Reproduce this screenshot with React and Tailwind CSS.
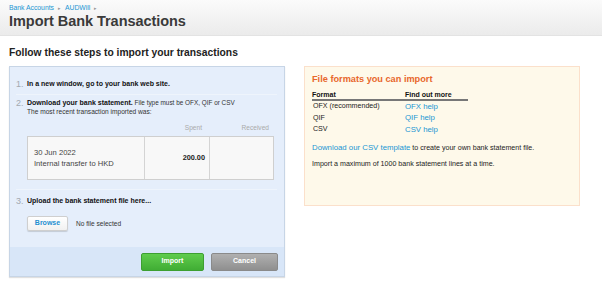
// Import Bank Transactions – static recreation
const font = { fontFamily: '"Liberation Sans", Arial, sans-serif' };

function Step({ n, children }) {
  return (
    <div className="flex">
      <div className="w-[11px] shrink-0 text-[9px] leading-[10px] text-[#a3a9b0]">{n}.</div>
      <div className="flex-1 min-w-0">{children}</div>
    </div>
  );
}

function Separator({ className = '' }) {
  return <div className={`h-px bg-[#d3dfee] border-b border-[#eef4fc] ${className}`} />;
}

const formats = [
  { name: 'OFX (recommended)', link: 'OFX help' },
  { name: 'QIF', link: 'QIF help' },
  { name: 'CSV', link: 'CSV help' },
];

export default function App() {
  return (
    <div className="w-[602px] h-[291px] overflow-hidden bg-white text-[#222]" style={font}>
      {/* Page header */}
      <div className="h-[36px] pl-[9px] pt-[4px] bg-gradient-to-b from-[#fbfbfb] to-[#ebebeb] border-b border-[#e3e3e3]">
        <div className="flex items-center gap-[4px] text-[6.8px] leading-[8px] text-[#2196d3]">
          <span>Bank Accounts</span>
          <span className="text-[#999] text-[5px]">▸</span>
          <span>AUDWill</span>
          <span className="text-[#999] text-[5px]">▸</span>
        </div>
        <h1 className="text-[14.5px] leading-[18px] font-bold text-[#3a3a3a] tracking-[-0.05px]">
          Import Bank Transactions
        </h1>
      </div>

      <h2 className="ml-[9px] mt-[11px] text-[10.3px] leading-[12px] font-bold text-[#222]">
        Follow these steps to import your transactions
      </h2>

      <div className="flex gap-[19px] ml-[9px] mt-[7px] items-start">
        {/* Steps panel */}
        <div className="w-[276px] h-[211px] flex flex-col border border-[#c7d5e6] bg-[#e5eefb] shadow-[0_1px_1px_rgba(0,0,0,0.12)]">
          <div className="flex-1 pl-[6px] pr-[10px] pt-[12px]">
            <Step n={1}>
              <div className="text-[7px] leading-[10px] font-bold text-[#111]">
                In a new window, go to your bank web site.
              </div>
            </Step>

            <Separator className="mt-[5px] mr-[-3px]" />

            <div className="pt-[3px]">
              <Step n={2}>
                <div className="text-[6.4px] leading-[9px] text-[#333]">
                  <span className="text-[7px] font-bold text-[#111]">Download your bank statement.</span>{' '}
                  File type must be OFX, QIF or CSV
                </div>
                <div className="text-[6.6px] leading-[9px] text-[#333]">
                  The most recent transaction imported was:
                </div>
                <div className="grid grid-cols-[116px_65px_65px] mt-[7px] text-[6.6px] leading-[9px] text-[#aaa]">
                  <div />
                  <div className="text-right pr-[6px]">Spent</div>
                  <div className="text-right pr-[4px]">Received</div>
                </div>
                <div className="grid grid-cols-[116px_65px_65px] mt-[4px] h-[44px] border border-[#cfcfcf] bg-[#f8f8f8] text-[#444]">
                  <div className="pl-[6px] flex flex-col justify-center text-[7.6px] leading-[11px]">
                    <span>30 Jun 2022</span>
                    <span>Internal transfer to HKD</span>
                  </div>
                  <div className="border-l border-[#d4d4d4] flex items-center justify-end pr-[4px] text-[7.3px] font-bold text-[#222]">
                    200.00
                  </div>
                  <div className="border-l border-[#d4d4d4]" />
                </div>
              </Step>
            </div>

            <Separator className="mt-[9px] mr-[-3px]" />

            <div className="pt-[6px]">
              <Step n={3}>
                <div className="text-[7px] leading-[10px] font-bold text-[#111]">
                  Upload the bank statement file here...
                </div>
                <div className="flex items-center gap-[8px] mt-[10px]">
                  <button className="w-[41px] h-[15px] rounded-[2px] border border-[#cfcfcf] bg-gradient-to-b from-white to-[#f1f1f1] shadow-[0_1px_1px_rgba(0,0,0,0.15)] text-[7px] font-bold text-[#1f8fd0]">
                    Browse
                  </button>
                  <span className="text-[6.6px] text-[#333]">No file selected</span>
                </div>
              </Step>
            </div>
          </div>

          {/* Footer actions */}
          <div className="h-[29px] bg-[#d8e6f8] flex items-center justify-end gap-[7px] pr-[6px]">
            <button className="w-[63px] h-[18px] rounded-[2px] border border-[#3d9f31] bg-gradient-to-b from-[#5fcc4c] to-[#40ad34] text-white text-[7px] font-bold">
              Import
            </button>
            <button className="w-[67px] h-[18px] rounded-[2px] border border-[#8a8a8a] bg-gradient-to-b from-[#b0b0b0] to-[#8f8f8f] text-white text-[7px] font-bold">
              Cancel
            </button>
          </div>
        </div>

        {/* File formats panel */}
        <div className="w-[276px] h-[140px] border border-[#fbe0cb] bg-[#fef9ea] pl-[7px] pt-[6px]">
          <h3 className="text-[9.2px] leading-[12px] font-bold text-[#e8672c]">File formats you can import</h3>
          <div className="w-[156px] mt-[5px]">
            <div className="flex text-[7px] leading-[9px] font-bold text-[#111] border-b-2 border-[#777]">
              <div className="w-[93px]">Format</div>
              <div>Find out more</div>
            </div>
            {formats.map((f) => (
              <div key={f.name} className="flex items-center h-[11.5px]">
                <div className="w-[93px] pl-[1px] text-[7.1px] text-[#222]">{f.name}</div>
                <div className="text-[7.8px] text-[#2196d3]">{f.link}</div>
              </div>
            ))}
          </div>
          <p className="mt-[6px] text-[7.1px] leading-[11px] text-[#222]">
            <span className="text-[7.8px] text-[#2196d3]">Download our CSV template</span> to create your own bank statement file.
          </p>
          <p className="mt-[5px] text-[7.1px] leading-[11px] text-[#222]">
            Import a maximum of 1000 bank statement lines at a time.
          </p>
        </div>
      </div>
    </div>
  );
}
